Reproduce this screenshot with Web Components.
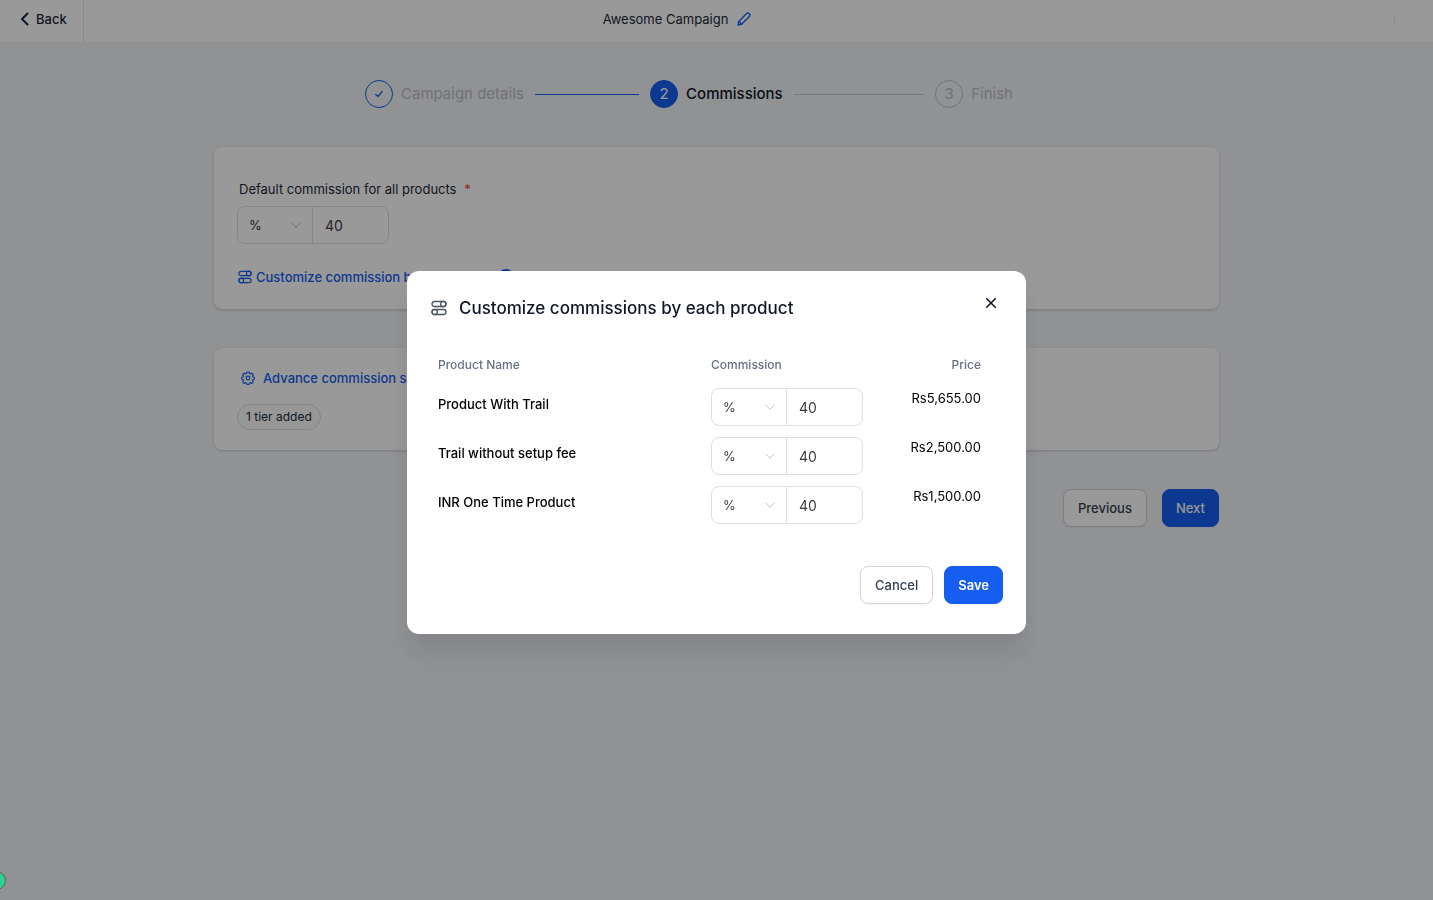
<!DOCTYPE html>
<html lang="en">
<head>
  <meta charset="UTF-8">
  <meta name="viewport" content="width=device-width, initial-scale=1">
  <title>Awesome Campaign</title>
  <style>
    body {
      background-color: #f2f4f7;
      color: #1d2939;
      font-family: Inter, "Liberation Sans", sans-serif;
      font-size: 13px;
      line-height: 20px;
      margin: 0;
      min-height: 100vh;
    }
  </style>
</head>
<body>
  <campaign-page></campaign-page>

  <script>
    // ui-icon

    const icons = {
      back: '<path d="M10.500 2.500 5 8l5.500 5.500" stroke-width="2"/>',
      pencil: '<path d="M2 14l.8-3.6L10.6 2.600a1.700 1.700 0 0 1 2.500 0l.3.3a1.700 1.700 0 0 1 0 2.500L5.600 13.200zM3 10.500l2.600 2.600" stroke-width="1.4"/>',
      check: '<path d="M2.500 8.500 6.300 12 13 4" stroke-width="2"/>',
      close: '<path d="M3.700 3.700l8.600 8.600M12.300 3.700l-8.600 8.600" stroke-width="1.6"/>',
      down: '<path d="M2.500 5.500 8 11 13.500 5.500" stroke-width="1.1"/>',
      sliders: '<rect x="1" y="1.500" width="14" height="5" rx="2.500"/><circle cx="12.300" cy="4" r="2.700"/><rect x="1" y="9.500" width="14" height="5" rx="2.500"/><circle cx="3.700" cy="12" r="2.700"/>',
      gear: '<circle cx="8" cy="8" r="2.200"/><path d="M6.700 1.200h2.600l.4 1.800 1 .4 1.600-1 1.800 1.800-1 1.600.4 1 1.700.3v2.400l-1.700.4-.4 1 1 1.600-1.800 1.800-1.600-1-1 .4-.4 1.700H6.700l-.4-1.700-1-.4-1.600 1-1.800-1.800 1-1.600-.4-1-1.700-.4V7.100l1.700-.3.4-1-1-1.600 1.800-1.800 1.600 1 1-.4z"/>',
      info: '<circle cx="8" cy="8" r="8" fill="currentColor" stroke="none"/><path d="M8 7.300v4M8 4.500v.3" stroke="white" stroke-width="1.5"/>'
    };

    class UiIcon extends HTMLElement {
      constructor(){
        super();

        const shadowRoot = this.attachShadow({mode: 'open'});

        shadowRoot.innerHTML = `
        <style>
          :host {
            display: inline-flex;
            flex: none;
            height: 16px;
            width: 16px;
          }

          svg {
            fill: none;
            height: 100%;
            overflow: visible;
            stroke: currentColor;
            stroke-linecap: round;
            stroke-linejoin: round;
            stroke-width: 1.3;
            width: 100%;
          }
        </style>
        <svg viewBox="0 0 16 16" aria-hidden="true">${icons[this.getAttribute('name')]}</svg>
        `;
      }
    }

    customElements.define('ui-icon', UiIcon);

    // ui-button

    class UiButton extends HTMLElement {
      constructor(){
        super();

        const shadowRoot = this.attachShadow({mode: 'open'});

        shadowRoot.innerHTML = `
        <style>
          :host {
            display: inline-flex;
          }

          button {
            background-color: white;
            border: 1px solid #d0d5dd;
            border-radius: 8px;
            box-shadow: 0 1px 2px rgb(16, 24, 40, 0.05);
            color: #344054;
            cursor: pointer;
            font: inherit;
            font-weight: 500;
            height: 38px;
            padding: 0 14px;
          }

          :host([primary]) button {
            background-color: #155eef;
            border-color: #155eef;
            color: white;
            padding: 0 13px;
          }

          :host([strong]) button {
            font-weight: 600;
          }
        </style>
        <button type="button"><slot></slot></button>
        `;
      }
    }

    customElements.define('ui-button', UiButton);

    // ui-card

    class UiCard extends HTMLElement {
      constructor(){
        super();

        const shadowRoot = this.attachShadow({mode: 'open'});

        shadowRoot.innerHTML = `
        <style>
          :host {
            align-items: flex-start;
            background-color: white;
            border-radius: 8px;
            box-shadow: 0 1px 3px rgb(16, 24, 40, 0.2);
            display: flex;
            flex-direction: column;
            padding: 20px 23px;
          }
        </style>
        <slot></slot>
        `;
      }
    }

    customElements.define('ui-card', UiCard);

    // step-item

    class StepItem extends HTMLElement {
      constructor(){
        super();

        const shadowRoot = this.attachShadow({mode: 'open'});

        shadowRoot.innerHTML = `
        <style>
          :host {
            align-items: center;
            color: #bcbfc4;
            display: flex;
            flex: 1;
            font-size: 15px;
            line-height: 24px;
            white-space: nowrap;
          }

          :host(:last-child) {
            flex: none;
          }

          .mark {
            align-items: center;
            border: 1px solid #bcbfc4;
            border-radius: 50%;
            box-sizing: border-box;
            display: flex;
            height: 28px;
            justify-content: center;
            margin-right: 8px;
            width: 28px;
          }

          .line {
            background-color: #c9ccd1;
            flex: 1;
            height: 1px;
            margin: 0 11px;
          }

          :host(:last-child) .line {
            display: none;
          }

          :host([state="done"]) .mark {
            border-color: #155eef;
            color: #155eef;
          }

          :host([state="done"]) .line {
            background-color: #155eef;
          }

          :host([state="active"]) {
            color: #101828;
            font-weight: 500;
          }

          :host([state="active"]) .mark {
            background-color: #155eef;
            border-color: #155eef;
            color: white;
            font-weight: 400;
          }

          ::slotted(ui-icon) {
            height: 10px;
            width: 10px;
          }
        </style>
        <span class="mark"><slot name="mark"></slot></span>
        <slot></slot>
        <span class="line"></span>
        `;
      }
    }

    customElements.define('step-item', StepItem);

    // commission-input

    class CommissionInput extends HTMLElement {
      constructor(){
        super();

        const shadowRoot = this.attachShadow({mode: 'open'});
        const label = this.getAttribute('label');
        const name = this.getAttribute('name') || label;

        shadowRoot.innerHTML = `
        <style>
          :host {
            display: block;
          }

          label {
            display: block;
            margin: 0 2px 7px;
          }

          label span {
            color: #f04438;
            margin-left: 4px;
          }

          .group {
            border: 1px solid #dfdfe2;
            border-radius: 8px;
            box-sizing: border-box;
            display: grid;
            grid-template-columns: 1fr 1fr;
            height: 38px;
            overflow: hidden;
            width: 152px;
          }

          .unit {
            align-items: center;
            border-right: 1px solid #dfdfe2;
            display: grid;
          }

          .unit > * {
            grid-area: 1 / 1;
          }

          ui-icon {
            color: #b4b4b8;
            height: 12px;
            justify-self: end;
            margin-right: 10px;
            pointer-events: none;
            width: 12px;
          }

          select, input {
            appearance: none;
            background: none;
            border: none;
            box-sizing: border-box;
            color: #3b3b3f;
            font: inherit;
            height: 100%;
            margin: 0;
            min-width: 0;
            padding: 0 11px;
            width: 100%;
          }

          input {
            font-size: 14px;
            padding: 0 12px;
          }
        </style>
        ${label ? `<label for="amount">${label} <span>*</span></label>` : ''}
        <div class="group">
          <div class="unit">
            <select aria-label="${name} unit"><option>%</option></select>
            <ui-icon name="down"></ui-icon>
          </div>
          <input id="amount" type="text" inputmode="decimal" value="${this.getAttribute('value')}" ${label ? '' : `aria-label="${name} commission"`}>
        </div>
        `;
      }
    }

    customElements.define('commission-input', CommissionInput);

    // app-header

    class AppHeader extends HTMLElement {
      constructor(){
        super();

        const shadowRoot = this.attachShadow({mode: 'open'});

        shadowRoot.innerHTML = `
        <style>
          :host {
            align-items: center;
            background-color: white;
            display: grid;
            grid-template-columns: 84px 1fr 162px;
            height: 42px;
          }

          a {
            align-items: center;
            border-right: 1px solid #e4e7ec;
            box-sizing: border-box;
            color: #1d2939;
            display: flex;
            font-weight: 500;
            gap: 3px;
            height: 100%;
            padding: 0 0 4px 17px;
            text-decoration: none;
          }

          .title {
            align-items: center;
            display: flex;
            gap: 8px;
            justify-content: center;
            padding-bottom: 4px;
          }

          button {
            background: none;
            border: none;
            color: #155eef;
            cursor: pointer;
            display: flex;
            padding: 0;
          }

          .divider {
            background-color: #eaecf0;
            height: 10px;
            justify-self: end;
            margin-right: 38px;
            width: 1px;
          }
        </style>
        <a href="#"><ui-icon name="back"></ui-icon>Back</a>
        <div class="title">
          <slot></slot>
          <button type="button" aria-label="Rename campaign"><ui-icon name="pencil"></ui-icon></button>
        </div>
        <span class="divider"></span>
        `;
      }
    }

    customElements.define('app-header', AppHeader);

    // product-dialog

    const products = [
      {name: 'Product With Trail', price: 'Rs5,655.00'},
      {name: 'Trail without setup fee', price: 'Rs2,500.00'},
      {name: 'INR One Time Product', price: 'Rs1,500.00'}
    ];

    class ProductDialog extends HTMLElement {
      constructor(){
        super();

        const shadowRoot = this.attachShadow({mode: 'open'});

        shadowRoot.innerHTML = `
        <style>
          :host {
            align-items: center;
            background-color: rgb(0, 0, 0, 0.4);
            box-sizing: border-box;
            display: flex;
            inset: 0;
            justify-content: center;
            padding: 17px 12px 12px;
            position: fixed;
          }

          section {
            background-color: white;
            border-radius: 12px;
            box-shadow: 0 20px 24px rgb(16, 24, 40, 0.1);
            box-sizing: border-box;
            max-width: 619px;
            padding: 24px 23px 30px 24px;
            width: 100%;
          }

          header {
            align-items: center;
            display: flex;
            gap: 12px;
          }

          header ui-icon {
            color: #475467;
          }

          h2 {
            color: #101828;
            flex: 1;
            font-size: 17px;
            font-weight: 500;
            line-height: 26px;
            margin: 0;
          }

          .close {
            align-self: flex-start;
            background: none;
            border: none;
            cursor: pointer;
            display: flex;
            padding: 0 4px;
          }

          .close ui-icon {
            color: #101828;
          }

          table {
            border-collapse: collapse;
            margin: 34px 22px 31px 7px;
            table-layout: fixed;
            width: calc(100% - 29px);
          }

          th {
            color: #667085;
            font-size: 12px;
            font-weight: 500;
            padding: 0 0 13px;
            text-align: left;
          }

          th:nth-child(2) {
            width: 152px;
          }

          th:first-child {
            width: 273px;
          }

          td {
            color: black;
            padding: 0 0 11px;
            vertical-align: top;
          }

          td:first-child {
            font-weight: 500;
            padding-top: 6px;
          }

          th:last-child, td:last-child {
            text-align: right;
          }

          footer {
            display: flex;
            gap: 11px;
            justify-content: flex-end;
          }
        </style>
        <section role="dialog" aria-labelledby="title">
          <header>
            <ui-icon name="sliders"></ui-icon>
            <h2 id="title">Customize commissions by each product</h2>
            <button class="close" type="button" aria-label="Close"><ui-icon name="close"></ui-icon></button>
          </header>
          <table>
            <thead>
              <tr><th>Product Name</th><th>Commission</th><th>Price</th></tr>
            </thead>
            <tbody>
              ${products.map(product => `
              <tr>
                <td>${product.name}</td>
                <td><commission-input name="${product.name}" value="40"></commission-input></td>
                <td>${product.price}</td>
              </tr>`).join('')}
            </tbody>
          </table>
          <footer>
            <ui-button>Cancel</ui-button>
            <ui-button primary strong>Save</ui-button>
          </footer>
        </section>
        `;
      }
    }

    customElements.define('product-dialog', ProductDialog);

    // campaign-page

    class CampaignPage extends HTMLElement {
      constructor(){
        super();

        const shadowRoot = this.attachShadow({mode: 'open'});

        shadowRoot.innerHTML = `
        <style>
          :host {
            display: block;
          }

          main {
            box-sizing: border-box;
            margin: 0 auto;
            max-width: 1029px;
            padding: 38px 12px;
          }

          .steps {
            display: flex;
            margin: 0 206px 39px 151px;
          }

          ui-card {
            margin-bottom: 39px;
          }

          .default {
            padding: 32px 23px 22px;
          }

          a {
            align-items: center;
            color: #155eef;
            display: flex;
            font-weight: 500;
            gap: 4px;
            text-decoration: none;
          }

          a ui-icon {
            height: 14px;
            width: 14px;
          }

          .customize {
            margin-top: 23px;
            padding-left: 1px;
          }

          .customize ui-icon:last-child {
            height: 16px;
            margin-left: 16px;
            width: 16px;
          }

          .advance {
            gap: 8px;
            padding-left: 4px;
          }

          .tag {
            background-color: #fcfcfd;
            border: 1px solid #dcdfe4;
            border-radius: 13px;
            font-size: 12px;
            line-height: 24px;
            margin-top: 16px;
            padding: 0 8px;
          }

          .actions {
            display: flex;
            gap: 15px;
            justify-content: flex-end;
          }

          .bubble {
            background-color: #2fcf92;
            border: 1px solid #4b6a60;
            border-radius: 50%;
            bottom: 10px;
            box-sizing: border-box;
            height: 19px;
            left: -13px;
            position: fixed;
            width: 19px;
          }
        </style>
        <app-header>Awesome Campaign</app-header>
        <main>
          <nav class="steps" aria-label="Steps">
            <step-item state="done"><ui-icon slot="mark" name="check"></ui-icon>Campaign details</step-item>
            <step-item state="active"><span slot="mark">2</span>Commissions</step-item>
            <step-item><span slot="mark">3</span>Finish</step-item>
          </nav>
          <ui-card class="default">
            <commission-input label="Default commission for all products" value="40"></commission-input>
            <a class="customize" href="#"><ui-icon name="sliders"></ui-icon>Customize commission by products<ui-icon name="info"></ui-icon></a>
          </ui-card>
          <ui-card>
            <a class="advance" href="#"><ui-icon name="gear"></ui-icon>Advance commission settings</a>
            <span class="tag">1 tier added</span>
          </ui-card>
          <div class="actions">
            <ui-button>Previous</ui-button>
            <ui-button primary>Next</ui-button>
          </div>
        </main>
        <product-dialog></product-dialog>
        <span class="bubble"></span>
        `;
      }
    }

    customElements.define('campaign-page', CampaignPage);
  </script>
</body>
</html>
